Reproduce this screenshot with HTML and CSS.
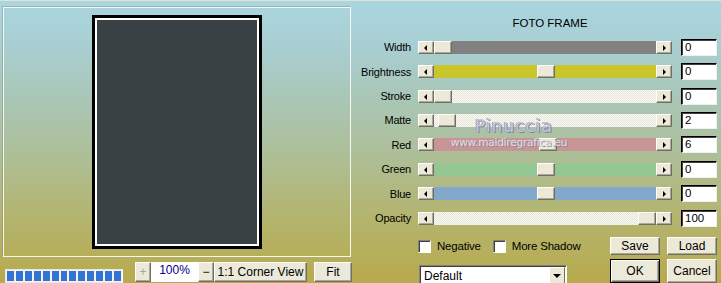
FILE: index.html
```html
<!DOCTYPE html>
<html>
<head>
<meta charset="utf-8">
<link rel="stylesheet" href="styles.css">
</head>
<body>
<div class="app">
  <div class="left">
    <div class="preview">
      <div class="photo"><div class="photo-inner"></div></div>
    </div>
    <div class="toolbar">
      <div class="progress">
        <span></span><span></span><span></span><span></span><span></span><span></span><span></span><span></span><span></span><span></span><span></span><span></span><span></span>
      </div>
      <div class="zoomgroup">
        <div class="btn small disabled">+</div>
        <div class="zoomval">100%</div>
        <div class="btn small">&minus;</div>
        <div class="btn corner">1:1 Corner View</div>
      </div>
      <div class="btn fit">Fit</div>
    </div>
  </div>
  <div class="right">
    <div class="title">FOTO FRAME</div>
    <div class="rows">
      <div class="label">Width</div>
      <div class="slider"><div class="arrow l"></div><div class="track gray"><div class="thumb" style="left:0px"></div></div><div class="arrow r"></div></div>
      <div class="num">0</div>

      <div class="label">Brightness</div>
      <div class="slider"><div class="arrow l"></div><div class="track yellow"><div class="thumb" style="left:103px"></div></div><div class="arrow r"></div></div>
      <div class="num">0</div>

      <div class="label">Stroke</div>
      <div class="slider"><div class="arrow l"></div><div class="track dither"><div class="thumb" style="left:0px"></div></div><div class="arrow r"></div></div>
      <div class="num">0</div>

      <div class="label">Matte</div>
      <div class="slider"><div class="arrow l"></div><div class="track dither"><div class="thumb" style="left:4px"></div></div><div class="arrow r"></div></div>
      <div class="num">2</div>

      <div class="label">Red</div>
      <div class="slider"><div class="arrow l"></div><div class="track red"><div class="thumb" style="left:105px"></div></div><div class="arrow r"></div></div>
      <div class="num">6</div>

      <div class="label">Green</div>
      <div class="slider"><div class="arrow l"></div><div class="track green"><div class="thumb" style="left:103px"></div></div><div class="arrow r"></div></div>
      <div class="num">0</div>

      <div class="label">Blue</div>
      <div class="slider"><div class="arrow l"></div><div class="track blue"><div class="thumb" style="left:103px"></div></div><div class="arrow r"></div></div>
      <div class="num">0</div>

      <div class="label">Opacity</div>
      <div class="slider"><div class="arrow l"></div><div class="track dither"><div class="thumb" style="left:204px"></div></div><div class="arrow r"></div></div>
      <div class="num">100</div>
    </div>
    <div class="opts">
      <label class="check"><span class="box"></span>Negative</label>
      <label class="check"><span class="box"></span>More Shadow</label>
      <div class="btn action save">Save</div>
      <div class="btn action">Load</div>
    </div>
    <div class="opts2">
      <div class="select"><span class="seltext">Default</span><span class="selbtn"></span></div>
      <div class="btn action ok">OK</div>
      <div class="btn action">Cancel</div>
    </div>
    <div class="wm">
      <div class="wm-name">Pinuccia</div>
      <div class="wm-url">www.maidiregrafica.eu</div>
    </div>
  </div>
</div>
</body>
</html>
```

FILE: styles.css
```css
* { box-sizing: border-box; }
html, body { margin: 0; padding: 0; }
body {
  width: 721px;
  height: 283px;
  overflow: hidden;
  font-family: "Liberation Sans", Arial, sans-serif;
  font-size: 11px;
  color: #000;
}
.app {
  width: 721px;
  height: 283px;
  display: flex;
  border-top: 1px solid #e4e2cc;
  background: linear-gradient(to bottom, #a9d6e1 0%, #a9cfd3 15%, #a9c6b6 35%, #adc09c 52%, #b3b572 75%, #b8aa4c 100%);
  overflow: hidden;
}
.left {
  width: 351px;
  flex-shrink: 0;
  padding: 6px 0 0 3px;
  display: flex;
  flex-direction: column;
}
.preview {
  width: 348px;
  height: 253px;
  border: 1px solid #f6f6f2;
  box-shadow: -1px -1px 0 rgba(120,120,110,0.35);
  display: flex;
  align-items: center;
  justify-content: center;
}
.photo {
  width: 170px;
  height: 234px;
  border: 3px solid #000;
}
.photo-inner {
  width: 100%;
  height: 100%;
  border: 2px solid #fff;
  background: #3a4145;
}
.toolbar {
  display: flex;
  align-items: flex-start;
  margin-top: 5px;
}
.progress {
  margin: 7px 0 0 2px;
  width: 118px;
  height: 14px;
  border: 1px solid #e8e8e0;
  border-right-color: #fff;
  background: #f4f4f0;
  display: flex;
  gap: 2px;
  padding: 1px 1px;
}
.progress span {
  width: 7px;
  background: #3373d6;
}
.zoomgroup {
  display: flex;
  margin-left: 12px;
  height: 20px;
}
.btn {
  background: #ece9d8;
  border: 1px solid;
  border-color: #fff #716f64 #716f64 #fff;
  box-shadow: inset -1px -1px 0 #aca899;
  display: flex;
  align-items: center;
  justify-content: center;
  font-size: 12px;
  height: 20px;
  white-space: nowrap;
  flex-shrink: 0;
}
.btn.small { width: 16px; font-size: 12px; }
.btn.disabled { color: #a8a598; }
.zoomval {
  width: 47px;
  background: #fff;
  color: #000080;
  font-size: 12px;
  text-align: center;
  line-height: 17px;
}
.btn.corner { width: 93px; }
.btn.fit { width: 38px; margin-left: 7px; }
.right {
  position: relative;
  width: 370px;
  flex-shrink: 0;
  display: flex;
  flex-direction: column;
}
.title {
  margin: 15px 0 0 0;
  padding-left: 32px;
  width: 366px;
  height: 14px;
  line-height: 14px;
  text-align: center;
  font-size: 11.5px;
  margin-bottom: 5px;
}
.rows {
  display: grid;
  grid-template-columns: 60px 254px 36px;
  column-gap: 7px;
  grid-auto-rows: 24.43px;
  align-items: center;
}
.rows .num { margin-left: 2px; }
.label {
  text-align: right;
  letter-spacing: -0.2px;
}
.slider {
  display: flex;
  height: 13px;
}
.arrow {
  width: 16px;
  height: 13px;
  background: #ece9d8;
  border: 1px solid;
  border-color: #fff #716f64 #716f64 #fff;
  box-shadow: inset -1px -1px 0 #aca899;
  position: relative;
}
.arrow::after {
  content: "";
  position: absolute;
  top: 3px;
  width: 0;
  height: 0;
  border-top: 3px solid transparent;
  border-bottom: 3px solid transparent;
}
.arrow.l::after { left: 5px; border-right: 3px solid #000; }
.arrow.r::after { left: 6px; border-left: 3px solid #000; }
.track {
  flex: 1;
  position: relative;
  height: 13px;
}
.track.gray { background: #818181; }
.track.yellow { background: #c9c62c; }
.track.red { background: #c89596; }
.track.green { background: #93c690; }
.track.blue { background: #82a8cc; }
.track.dither {
  background-color: #f2efe4;
  background-image: repeating-conic-gradient(#fbfaf4 0 25%, #e6e3d8 0 50%);
  background-size: 2px 2px;
}
.thumb {
  position: absolute;
  top: 0;
  width: 18px;
  height: 13px;
  background: #ece9d8;
  border: 1px solid;
  border-color: #fff #716f64 #716f64 #fff;
  box-shadow: inset -1px -1px 0 #aca899;
}
.num {
  width: 36px;
  height: 17px;
  background: #fff;
  border: 1px solid;
  border-color: #000 #f0f0f0 #f0f0f0 #000;
  box-shadow: inset 1px 1px 0 #404040;
  padding-left: 3px;
  line-height: 15px;
  font-size: 11.5px;
}
.opts {
  display: flex;
  align-items: center;
  margin-top: 7px;
  padding-left: 67px;
  height: 18px;
}
.check {
  display: flex;
  align-items: center;
  letter-spacing: -0.2px;
  font-size: 11.5px;
  white-space: nowrap;
  flex-shrink: 0;
}
.check + .check { margin-left: 12px; }
.box {
  width: 13px;
  height: 13px;
  background: #fff;
  border: 1px solid;
  border-color: #808080 #fff #fff #808080;
  box-shadow: inset 1px 1px 0 #404040;
  margin-right: 6px;
}
.btn.action { width: 50px; height: 18px; font-size: 12px; }
.btn.save { margin-left: auto; margin-right: 0; }
.btn.action + .btn.action { margin-left: 7px; }
.opts .btn.action:last-child { margin-right: 4px; }
.opts2 {
  display: flex;
  align-items: flex-start;
  padding-left: 67px;
  margin-top: 1px;
}
.select {
  width: 148px;
  height: 20px;
  background: #fff;
  border: 1px solid;
  border-color: #808080 #fff #fff #808080;
  box-shadow: inset 1px 1px 0 #404040;
  display: flex;
  margin-top: 9px;
  margin-left: 1px;
}
.seltext { flex: 1; padding: 3px 0 0 4px; font-size: 12px; }
.selbtn {
  width: 16px;
  height: 17px;
  margin: 1px 1px 0 0;
  background: #ece9d8;
  border: 1px solid;
  border-color: #fff #716f64 #716f64 #fff;
  position: relative;
}
.selbtn::after {
  content: "";
  position: absolute;
  left: 3px;
  top: 6px;
  border-left: 4px solid transparent;
  border-right: 4px solid transparent;
  border-top: 4px solid #000;
}
.btn.ok {
  margin-left: 43px;
  margin-top: 3px;
  height: 24px;
  border: 1px solid #000;
  box-shadow: inset 1px 1px 0 #fff, inset -1px -1px 0 #716f64, inset -2px -2px 0 #aca899;
}
.opts2 .btn.action:last-child { margin-top: 3px; height: 24px; }
.wm {
  position: absolute;
  left: 94px;
  top: 115px;
  width: 130px;
  text-align: center;
  pointer-events: none;
}
.wm-name {
  margin-left: 8px;
  font-family: "DejaVu Sans", sans-serif;
  font-size: 17px;
  letter-spacing: 1px;
  color: #c4c6e2;
  text-shadow: 1px 1px 0 #7c7c94, -1px 0 0 #9a9ab4;
  line-height: 20px;
}
.wm-name, .wm-url { opacity: 0.9; }
.wm-url {
  margin-left: -2px;
  font-family: "DejaVu Sans", sans-serif;
  font-size: 10.5px;
  color: #e4e4ee;
  text-shadow: 1px 1px 0 #8a8aa0;
  line-height: 13px;
  letter-spacing: -0.2px;
}
```
